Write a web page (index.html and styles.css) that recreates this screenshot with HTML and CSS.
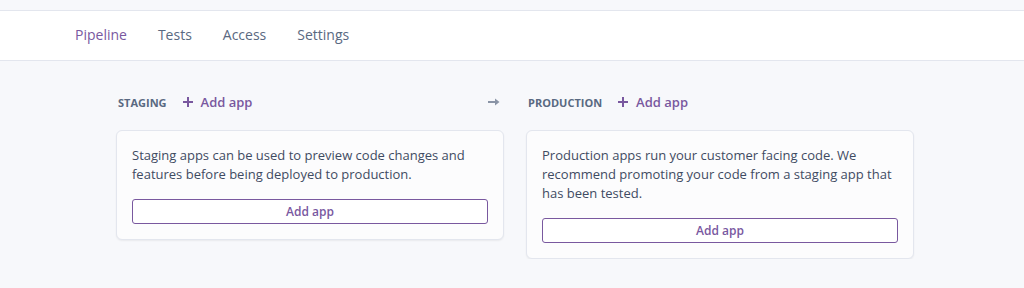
FILE: index.html
```html
<!DOCTYPE html>
<html lang="en">
  <head>
    <meta charset="UTF-8" />
    <title>Pipeline</title>
    <link rel="stylesheet" href="styles.css">
  </head>
  <body>
    <!-- Sub navigation -->
    <nav class="subnav">
      <a class="subnav-item active" href="#">Pipeline</a>
      <a class="subnav-item" href="#">Tests</a>
      <a class="subnav-item" href="#">Access</a>
      <a class="subnav-item" href="#">Settings</a>
    </nav>

    <main class="pipeline">
      <section class="stage">
        <div class="stage-header">
          <span class="stage-name">Staging</span>
          <a class="stage-add" href="#">
            <svg class="plus" width="10" height="10" viewBox="0 0 10 10">
              <path d="M5 0v10M0 5h10" stroke="currentColor" stroke-width="2" />
            </svg>
            Add app
          </a>
          <span class="stage-arrow">
            <svg width="12" height="8" viewBox="0 0 12 8">
              <path d="M0 4h8" stroke="#8a94a6" stroke-width="2" />
              <path d="M7 0.5l4.5 3.5-4.5 3.5z" fill="#8a94a6" />
            </svg>
          </span>
        </div>
        <div class="stage-card">
          <p>Staging apps can be used to preview code changes and features before being deployed to production.</p>
          <button class="add-btn">Add app</button>
        </div>
      </section>

      <section class="stage">
        <div class="stage-header">
          <span class="stage-name">Production</span>
          <a class="stage-add" href="#">
            <svg class="plus" width="10" height="10" viewBox="0 0 10 10">
              <path d="M5 0v10M0 5h10" stroke="currentColor" stroke-width="2" />
            </svg>
            Add app
          </a>
        </div>
        <div class="stage-card">
          <p>Production apps run your customer facing code. We recommend promoting your code from a staging app that has been tested.</p>
          <button class="add-btn">Add app</button>
        </div>
      </section>
    </main>
  </body>
</html>
```

FILE: styles.css
```css
:root {
  --purple: #79589f;
  --slate: #596981;
  --text-color: #3f4b62;
  --bg-color: #f7f8fb;
  --line: #e3e6ee;
}

* {
  margin: 0;
  padding: 0;
  box-sizing: border-box;
}

body {
  background-color: var(--bg-color);
  font-family: "Open Sans", sans-serif;
  color: var(--text-color);
  padding-top: 10px;
}

/* Sub navigation */
.subnav {
  display: flex;
  gap: 31px;
  height: 51px;
  align-items: center;
  padding-left: 75px;
  padding-bottom: 2px;
  background: #fff;
  border-top: 1px solid var(--line);
  border-bottom: 1px solid var(--line);
}

.subnav-item {
  font-size: 14px;
  color: var(--slate);
  text-decoration: none;
}

.subnav-item.active {
  color: var(--purple);
}

/* Pipeline columns */
.pipeline {
  display: grid;
  grid-template-columns: 388px 388px;
  gap: 22px;
  padding-left: 116px;
  padding-top: 30px;
  align-items: start;
}

.stage-header {
  display: flex;
  align-items: center;
  height: 22px;
  padding-left: 2px;
  margin-bottom: 17px;
}

.stage-name {
  font-size: 11px;
  font-weight: 700;
  text-transform: uppercase;
  color: var(--slate);
  margin-right: 16px;
}

.stage-add {
  display: flex;
  align-items: center;
  font-size: 13px;
  color: var(--purple);
  text-decoration: none;
  font-weight: 600;
}

.plus {
  margin-right: 8px;
}

.stage-arrow {
  margin-left: auto;
  margin-right: 4px;
  display: flex;
}

.stage-card {
  background: #fcfcfd;
  border: 1px solid var(--line);
  border-radius: 6px;
  box-shadow: 0 1px 2px rgba(0, 0, 0, 0.06);
  padding: 15px;
}

.stage-card p {
  font-size: 13px;
  line-height: 19px;
  margin-bottom: 15px;
}

.add-btn {
  display: block;
  width: 100%;
  height: 25px;
  background: #fff;
  border: 1px solid var(--purple);
  border-radius: 3px;
  color: var(--purple);
  font-family: inherit;
  font-size: 12px;
  font-weight: 600;
  cursor: pointer;
}
```
